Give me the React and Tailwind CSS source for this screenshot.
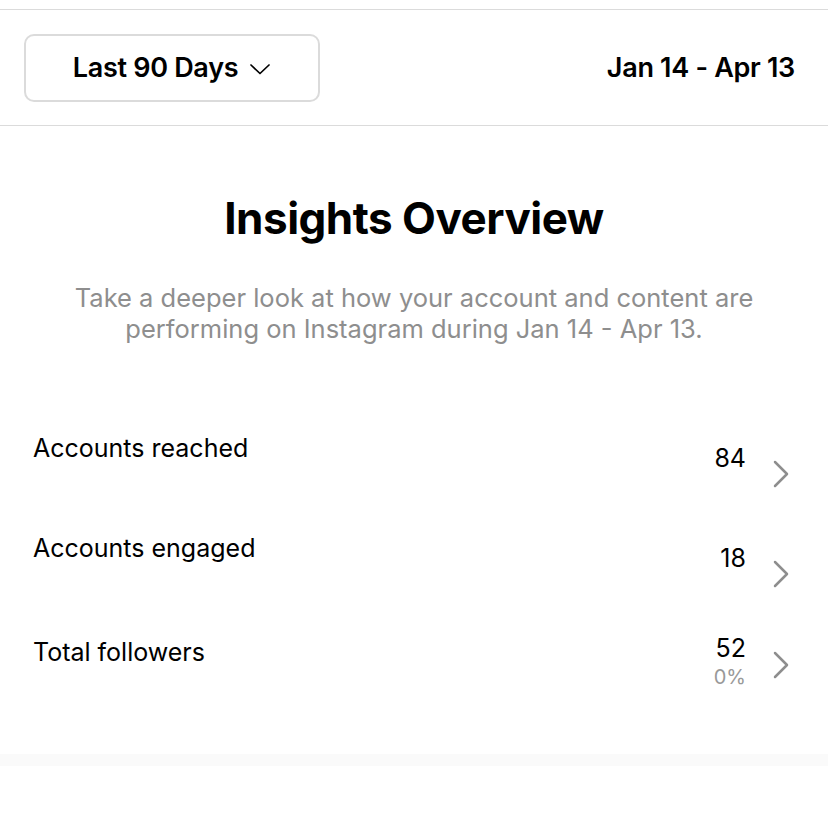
import React from 'react';

const rows = [
    { label: 'Accounts reached', value: '84', h: 'h-[100px]', valTop: 'mt-[11px]', chevTop: 'mt-[28px]' },
    { label: 'Accounts engaged', value: '18', h: 'h-[104px]', valTop: 'mt-[11px]', chevTop: 'mt-[28px]' },
    { label: 'Total followers', value: '52', sub: '0%', h: 'h-[100px]', valTop: '-mt-[3px]', chevTop: 'mt-[15px]' },
];

const Chevron = ({ className }) => (
    <svg width="18" height="28" viewBox="0 0 18 28" fill="none" className={'shrink-0 ' + className}>
        <path d="M3 2 L15 14 L3 26" stroke="#8e8e8e" strokeWidth="2.5" strokeLinecap="round" strokeLinejoin="round" />
    </svg>
);

const App = () => {
    return (
        <div className="w-[828px] h-[828px] bg-white font-['Inter',sans-serif] text-black overflow-hidden">
            <div className="h-[10px] border-b border-[#dbdbdb]" />

            {/* header: range picker + dates */}
            <div className="h-[116px] px-6 flex items-center justify-between border-b border-[#dbdbdb]">
                <button className="w-[296px] h-[68px] pt-[2px] border-2 border-[#dbdbdb] rounded-[10px] flex items-center justify-center gap-[11px] text-[27px] font-semibold tracking-[-0.3px]">
                    Last 90 Days
                    <svg width="22" height="12" viewBox="0 0 22 12" fill="none">
                        <path d="M2 2 L11 10.5 L20 2" stroke="black" strokeWidth="1.7" strokeLinecap="round" strokeLinejoin="round" />
                    </svg>
                </button>
                <span className="text-[27px] font-semibold tracking-[-0.3px] pr-[9px] pt-[2px]">Jan 14 - Apr 13</span>
            </div>

            <div className="pt-[64px] flex flex-col items-center">
                <h1 className="text-[44px] leading-[56px] font-bold tracking-[-0.5px]">Insights Overview</h1>
                <p className="mt-[36px] text-[25.5px] leading-[31px] text-[#8e8e8e] text-center whitespace-nowrap">
                    Take a deeper look at how your account and content are
                    <br />
                    performing on Instagram during Jan 14 - Apr 13.
                </p>
            </div>

            <div className="mt-[88px] flex flex-col">
                {rows.map((r) => (
                    <div key={r.label} className={r.h + ' pl-[33px] pr-[38px] flex items-start justify-between'}>
                        <span className="text-[25px] leading-[32px]">{r.label}</span>
                        <div className="flex items-start gap-[26px]">
                            <div className={'flex flex-col items-end ' + r.valTop}>
                                <span className="text-[25px] leading-[30px]">{r.value}</span>
                                {r.sub && <span className="text-[20px] leading-[29px] text-[#999999]">{r.sub}</span>}
                            </div>
                            <Chevron className={r.chevTop} />
                        </div>
                    </div>
                ))}
            </div>

            <div className="mt-[18px] h-[12px] bg-[#fafafa]" />
        </div>
    );
};

export default App;
